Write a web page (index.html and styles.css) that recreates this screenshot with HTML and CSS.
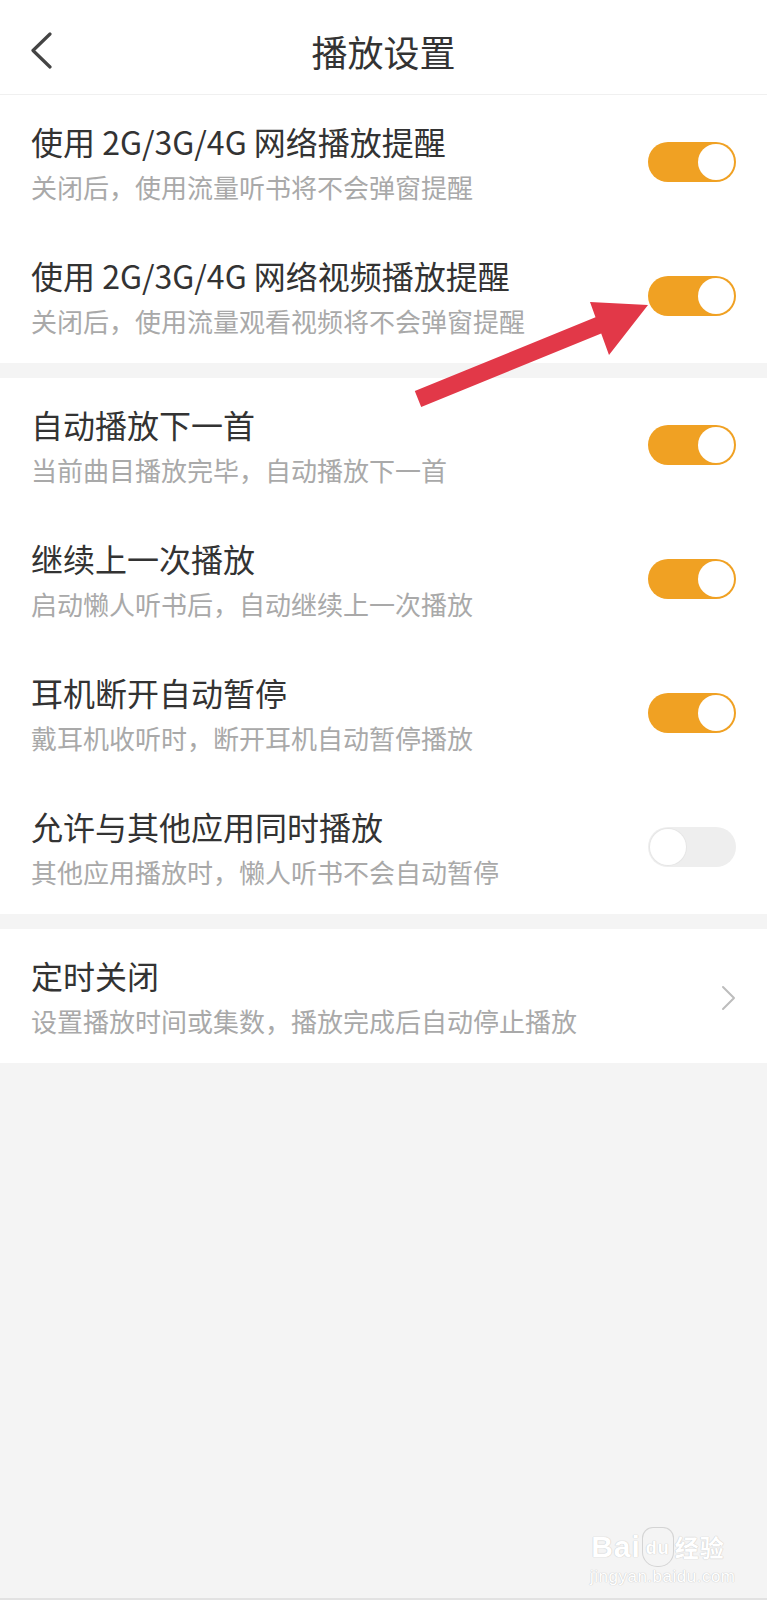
FILE: index.html
```html
<!DOCTYPE html>
<html lang="zh-CN">
<head>
<meta charset="utf-8">
<title>播放设置</title>
<link rel="stylesheet" href="styles.css">
</head>
<body>
<div class="page">
  <header class="topbar">
    <div class="back">
      <svg width="24" height="40" viewBox="0 0 24 40"><polyline points="19,3 2,19.5 19,36" fill="none" stroke="#444" stroke-width="3.2" stroke-linecap="round" stroke-linejoin="round"/></svg>
    </div>
    <h1 class="title">播放设置</h1>
    <div></div>
  </header>

  <section class="group">
    <div class="row">
      <div class="text">
        <div class="name">使用 2G/3G/4G 网络播放提醒</div>
        <div class="desc">关闭后，使用流量听书将不会弹窗提醒</div>
      </div>
      <div class="switch on"><span class="knob"></span></div>
    </div>
    <div class="row">
      <div class="text">
        <div class="name">使用 2G/3G/4G 网络视频播放提醒</div>
        <div class="desc">关闭后，使用流量观看视频将不会弹窗提醒</div>
      </div>
      <div class="switch on"><span class="knob"></span></div>
    </div>
  </section>

  <section class="group">
    <div class="row">
      <div class="text">
        <div class="name">自动播放下一首</div>
        <div class="desc">当前曲目播放完毕，自动播放下一首</div>
      </div>
      <div class="switch on"><span class="knob"></span></div>
    </div>
    <div class="row">
      <div class="text">
        <div class="name">继续上一次播放</div>
        <div class="desc">启动懒人听书后，自动继续上一次播放</div>
      </div>
      <div class="switch on"><span class="knob"></span></div>
    </div>
    <div class="row">
      <div class="text">
        <div class="name">耳机断开自动暂停</div>
        <div class="desc">戴耳机收听时，断开耳机自动暂停播放</div>
      </div>
      <div class="switch on"><span class="knob"></span></div>
    </div>
    <div class="row">
      <div class="text">
        <div class="name">允许与其他应用同时播放</div>
        <div class="desc">其他应用播放时，懒人听书不会自动暂停</div>
      </div>
      <div class="switch off"><span class="knob"></span></div>
    </div>
  </section>

  <section class="group">
    <div class="row">
      <div class="text">
        <div class="name">定时关闭</div>
        <div class="desc">设置播放时间或集数，播放完成后自动停止播放</div>
      </div>
      <svg class="chev" width="16" height="26" viewBox="0 0 16 26"><polyline points="2,2 13,13 2,24" fill="none" stroke="#bdbdbd" stroke-width="2" stroke-linecap="round" stroke-linejoin="round"/></svg>
    </div>
  </section>

  <svg class="arrow" width="767" height="1600" viewBox="0 0 767 1600">
    <polygon points="414.8,391.1 595.5,317.3 590,302 648,305 609,355 601.2,333.4 421.2,406.9" fill="#e23848"/>
  </svg>

  <div class="watermark">
    <div class="wm-logo"><span>Bai</span><span class="paw">du</span><span class="wm-cn">经验</span></div>
    <div class="wm-url">jingyan.baidu.com</div>
  </div>
</div>
</body>
</html>
```
FILE: styles.css
```css
html, body {
  margin: 0;
  padding: 0;
  background: #f4f4f4;
}
body {
  font-family: "Noto Sans CJK SC", "Noto Sans", sans-serif;
  color: #333;
}
.page {
  position: relative;
  width: 767px;
  height: 1600px;
  box-sizing: border-box;
  border-bottom: 2px solid #e2e2e2;
  overflow: hidden;
}
.topbar {
  display: grid;
  grid-template-columns: 1fr auto 1fr;
  align-items: center;
  height: 95px;
  box-sizing: border-box;
  padding: 8px 0 0 0;
  background: #fff;
  border-bottom: 1px solid #f0f0f0;
}
.back {
  display: flex;
  align-items: center;
  height: 40px;
  padding-left: 31px;
}
.back svg { display: block; }
.title {
  margin: 0;
  font-size: 36px;
  font-weight: 400;
  line-height: 48px;
  color: #333;
}
.group {
  background: #fff;
  margin-bottom: 15px;
}
.row {
  height: 134px;
  box-sizing: border-box;
  padding: 0 31px;
  display: flex;
  align-items: center;
  justify-content: space-between;
}
.text {
  display: flex;
  flex-direction: column;
  gap: 6px;
}
.name {
  font-size: 32px;
  line-height: 44px;
  color: #333;
  white-space: nowrap;
}
.desc {
  font-size: 26px;
  line-height: 36px;
  color: #a9a9a9;
  white-space: nowrap;
}
.switch {
  position: relative;
  width: 88px;
  height: 40px;
  border-radius: 20px;
  flex-shrink: 0;
}
.switch.on { background: #f0a123; }
.switch.off { background: #eeeeee; }
.knob {
  position: absolute;
  top: 2px;
  width: 36px;
  height: 36px;
  border-radius: 50%;
  background: #fff;
}
.switch.on .knob { right: 2px; }
.switch.off .knob { left: 2px; box-shadow: 0 0 0 1px #e6e6e6; }
.chev {
  display: block;
  margin-right: -1px;
  margin-top: 4px;
}
.arrow {
  position: absolute;
  left: 0;
  top: 0;
  pointer-events: none;
}
.watermark {
  position: absolute;
  left: 590px;
  top: 1528px;
  width: 136px;
  color: #fff;
  text-shadow: 0 0 1px #c9c9c9, 0 0 1px #c9c9c9;
  font-family: "Liberation Sans", "Noto Sans CJK SC", sans-serif;
  text-align: center;
}
.wm-logo {
  display: flex;
  align-items: center;
  justify-content: center;
  font-size: 30px;
  font-weight: 700;
  line-height: 36px;
  letter-spacing: 1px;
}
.paw {
  font-size: 18px;
  margin: 0 2px;
  padding: 2px 3px 0;
  border-radius: 10px 10px 14px 14px;
  box-shadow: 0 0 0 1px #d4d4d4;
}
.wm-cn {
  font-family: "Noto Sans CJK SC", sans-serif;
  font-size: 24px;
  font-weight: 700;
}
.wm-url {
  font-size: 17px;
  line-height: 22px;
  letter-spacing: 0.5px;
}
```
